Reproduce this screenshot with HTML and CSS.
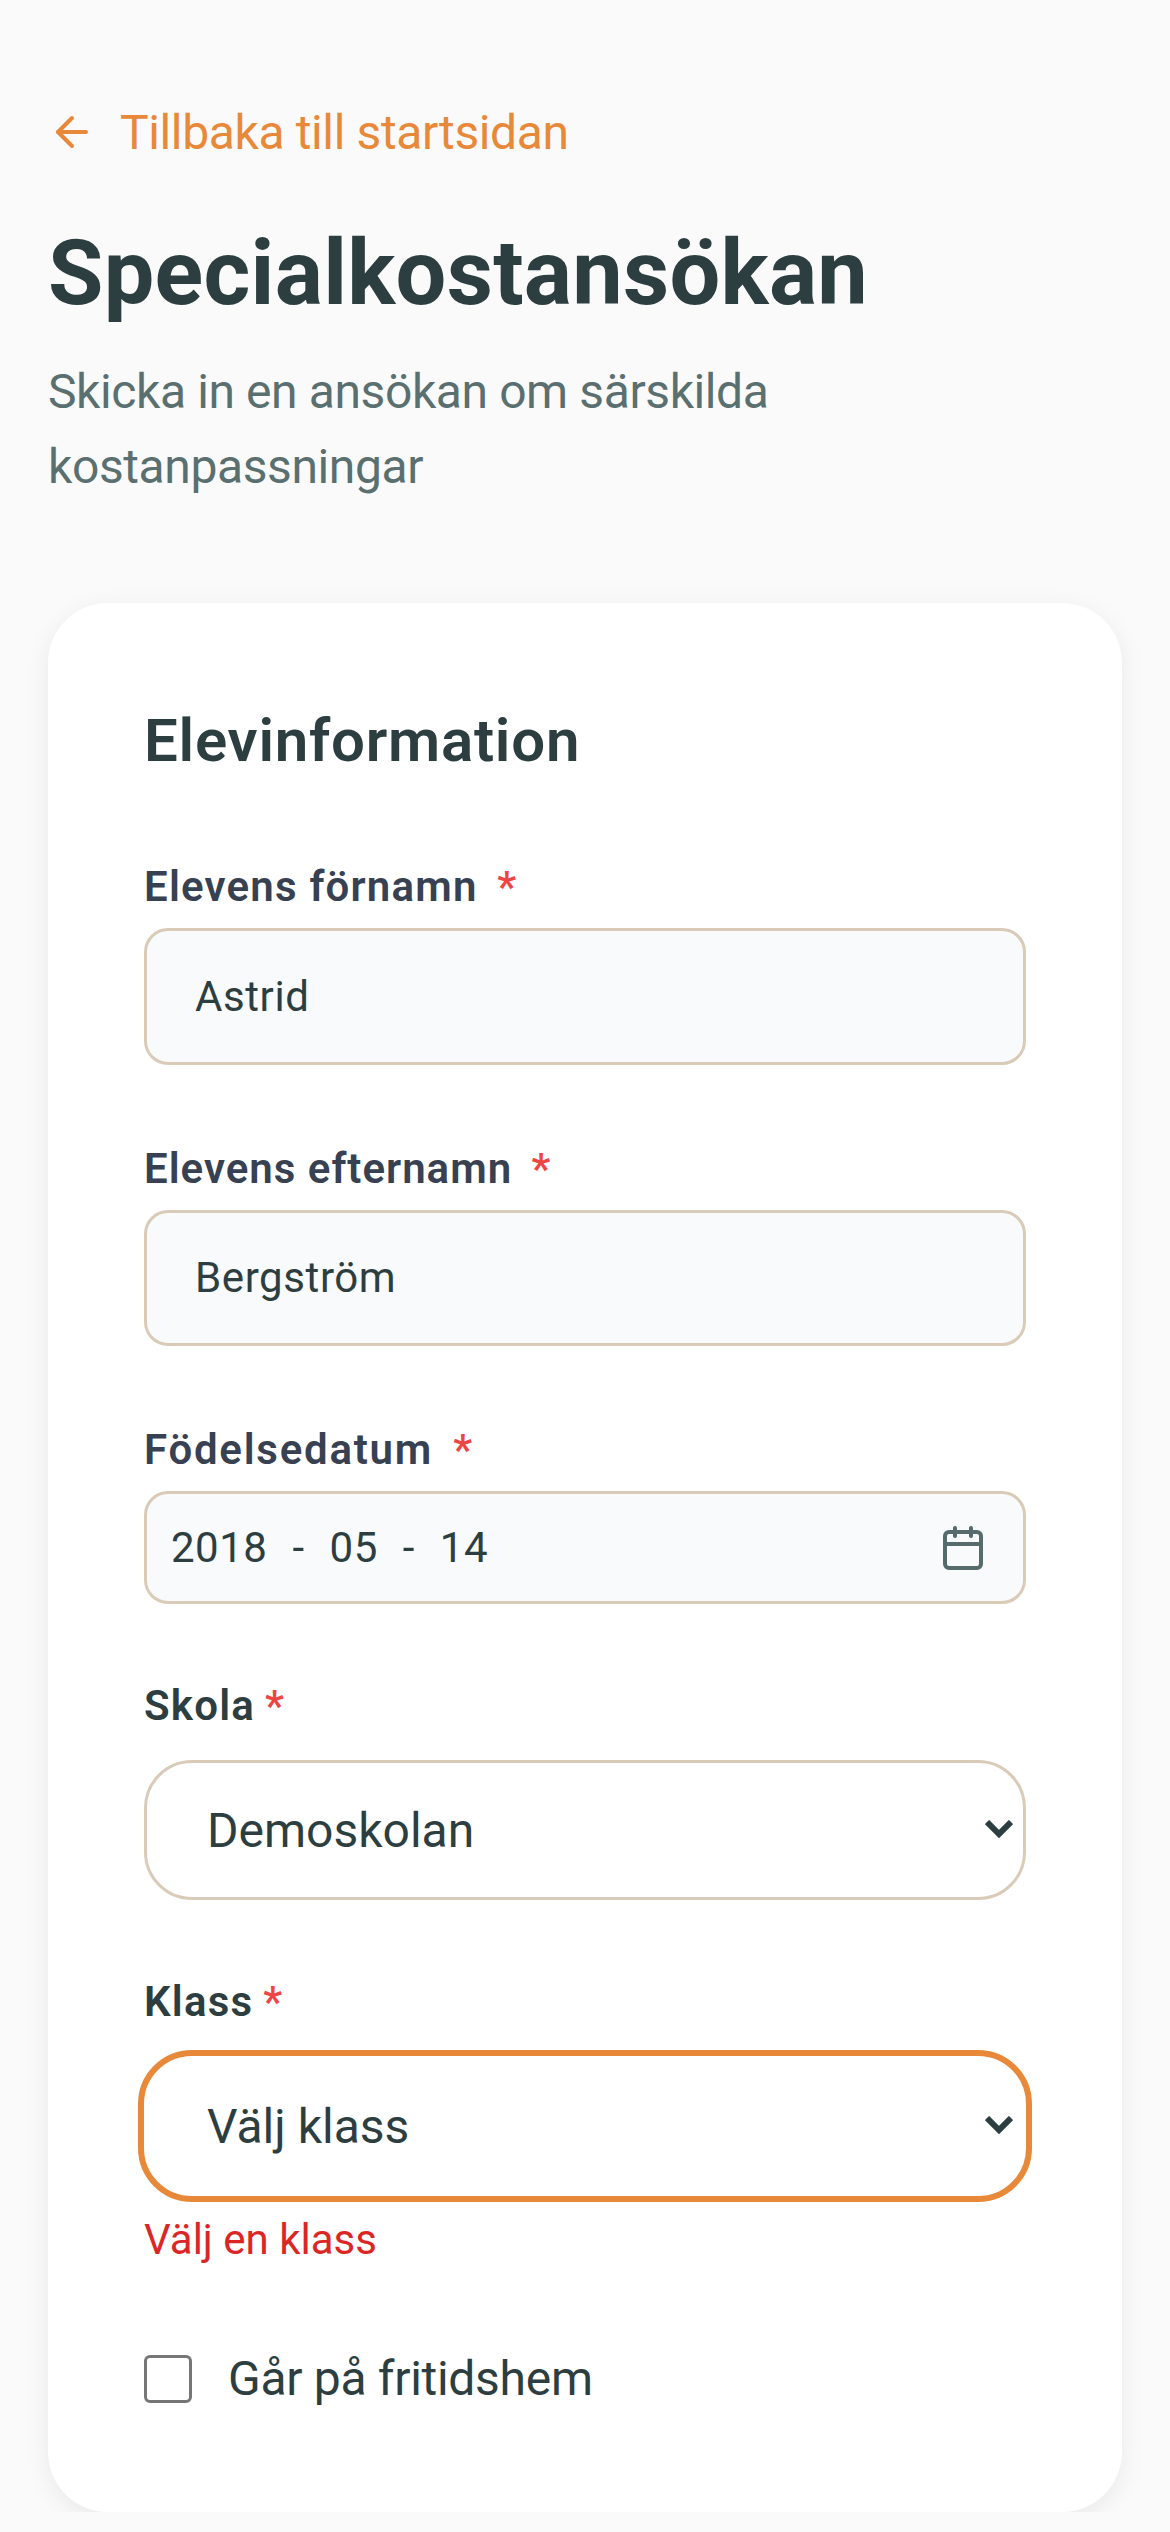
FILE: index.html
```html
<!DOCTYPE html>
<html lang="sv">
<head>
    <meta charset="UTF-8">
    <meta name="viewport" content="width=device-width, initial-scale=1.0">
    <title>Specialkostansökan</title>
    <link rel="stylesheet" href="styles.css">
</head>
<body>
    <div class="page">
        <a class="back-link" href="#">
            <svg class="back-icon" viewBox="0 0 24 24" fill="none" stroke="currentColor" stroke-width="2" stroke-linecap="round" stroke-linejoin="round">
                <path d="m12 19-7-7 7-7"/>
                <path d="M19 12H5"/>
            </svg>
            <span>Tillbaka till startsidan</span>
        </a>
        <h1>Specialkostansökan</h1>
        <p class="subtitle">Skicka in en ansökan om särskilda kostanpassningar</p>

        <form class="card">
            <h2>Elevinformation</h2>

            <div class="form-group">
                <label class="field-label" for="fornamn">Elevens förnamn <span class="star star-spaced">*</span></label>
                <input class="text-input" type="text" id="fornamn" value="Astrid">
            </div>

            <div class="form-group">
                <label class="field-label label-efternamn" for="efternamn">Elevens efternamn <span class="star star-spaced">*</span></label>
                <input class="text-input" type="text" id="efternamn" value="Bergström">
            </div>

            <div class="form-group">
                <label class="field-label label-datum">Födelsedatum <span class="star star-spaced">*</span></label>
                <div class="date-input">
                    <span class="date-part">2018</span>
                    <span class="date-sep">-</span>
                    <span class="date-part">05</span>
                    <span class="date-sep">-</span>
                    <span class="date-part">14</span>
                    <svg class="calendar-icon" viewBox="0 0 24 24" fill="none" stroke="currentColor" stroke-width="2" stroke-linecap="round" stroke-linejoin="round">
                        <path d="M8 2v4"/>
                        <path d="M16 2v4"/>
                        <rect x="3" y="4" width="18" height="18" rx="2"/>
                        <path d="M3 10h18"/>
                    </svg>
                </div>
            </div>

            <div class="form-group">
                <label class="select-label" for="skola">Skola<span class="star">*</span></label>
                <div class="select-wrap">
                    <select id="skola">
                        <option>Demoskolan</option>
                    </select>
                    <svg class="chevron" viewBox="0 0 28 18" fill="none" stroke="currentColor" stroke-width="6">
                        <path d="M2 2l12 12L26 2"/>
                    </svg>
                </div>
            </div>

            <div class="form-group">
                <label class="select-label" for="klass">Klass<span class="star">*</span></label>
                <div class="select-wrap">
                    <select id="klass" class="select-focus">
                        <option>Välj klass</option>
                    </select>
                    <svg class="chevron" viewBox="0 0 28 18" fill="none" stroke="currentColor" stroke-width="6">
                        <path d="M2 2l12 12L26 2"/>
                    </svg>
                </div>
                <div class="error">Välj en klass</div>
            </div>

            <label class="check-row">
                <input type="checkbox" class="checkbox">
                <span>Går på fritidshem</span>
            </label>
        </form>
    </div>
</body>
</html>
```

FILE: styles.css
```css
* {
    box-sizing: border-box;
}

body {
    font-family: Roboto, Arial, sans-serif;
    margin: 0;
    background-color: #fafafa;
    color: #2d3e40;
}

.page {
    padding: 96px 48px 0;
}

.back-link {
    display: flex;
    align-items: center;
    height: 72px;
    color: #e8893a;
    font-size: 48px;
    letter-spacing: -0.37px;
    text-decoration: none;
}

.back-icon {
    width: 48px;
    height: 48px;
    margin-right: 24px;
}

h1 {
    margin: 56px 0 0;
    font-size: 90px;
    line-height: 100px;
    font-weight: 700;
    letter-spacing: 0.27px;
    color: #2d3e40;
}

.subtitle {
    margin: 30px 0 0;
    font-size: 48px;
    line-height: 75px;
    letter-spacing: -0.4px;
    color: #5a6f70;
    max-width: 800px;
}

.card {
    margin-top: 99px;
    padding: 96px 96px 105px;
    background: #ffffff;
    border-radius: 60px;
    box-shadow: 0 6px 24px rgba(0, 0, 0, 0.07);
}

h2 {
    margin: 0;
    font-size: 60px;
    line-height: 84px;
    font-weight: 600;
    letter-spacing: 0.75px;
    color: #2d3e40;
}

.form-group {
    margin-top: 72px;
}

.field-label {
    display: block;
    height: 60px;
    margin-bottom: 13px;
    font-size: 42px;
    line-height: 63px;
    font-weight: 600;
    letter-spacing: 1.2px;
    color: #374151;
}

.label-efternamn {
    letter-spacing: 1px;
}

.label-datum {
    letter-spacing: 1.75px;
}

.star {
    margin-left: 10px;
    color: #ef4444;
}

.star-spaced {
    margin-left: 8px;
}

.text-input {
    display: block;
    width: 100%;
    height: 136.5px;
    padding: 0 48px;
    font-family: inherit;
    font-size: 42px;
    letter-spacing: 0.6px;
    color: #2d3e40;
    background: #f9fafb;
    border: 3px solid #d9cbb8;
    border-radius: 24px;
}

.date-input {
    display: flex;
    align-items: center;
    height: 113px;
    margin-bottom: 2px;
    padding: 0 36px 0 24px;
    font-size: 42px;
    letter-spacing: 0.5px;
    color: #2d3e40;
    background: #f9fafb;
    border: 3px solid #d9cbb8;
    border-radius: 24px;
}

.date-sep {
    margin: 0 25px;
}

.calendar-icon {
    width: 48px;
    height: 48px;
    margin-left: auto;
    color: #566b6b;
}

.select-label {
    display: block;
    height: 60px;
    margin-bottom: 24px;
    font-size: 42px;
    line-height: 60px;
    font-weight: 600;
    letter-spacing: 1.2px;
    color: #2d3e40;
}

.select-wrap {
    position: relative;
}

select {
    display: block;
    width: 100%;
    height: 140px;
    padding: 0 60px;
    font-family: inherit;
    font-size: 48px;
    color: #2d3e40;
    background: #ffffff;
    border: 3px solid #d9cbb8;
    border-radius: 48px;
    appearance: none;
}

.select-focus {
    outline: 6px solid #e8893a;
    border-color: #ffffff;
}

.chevron {
    position: absolute;
    right: 13px;
    top: 60px;
    width: 28px;
    height: 18px;
    color: #2d3e40;
}

.error {
    margin-top: 17px;
    font-size: 42px;
    line-height: 54px;
    color: #dc2626;
}

.check-row {
    display: flex;
    align-items: center;
    margin-top: 83px;
    font-size: 48px;
    letter-spacing: -0.3px;
    color: #2d3e40;
}

.checkbox {
    width: 48px;
    height: 48px;
    margin: 0 36px 0 0;
    appearance: none;
    background: #ffffff;
    border: 3px solid #767676;
    border-radius: 6px;
}
```
